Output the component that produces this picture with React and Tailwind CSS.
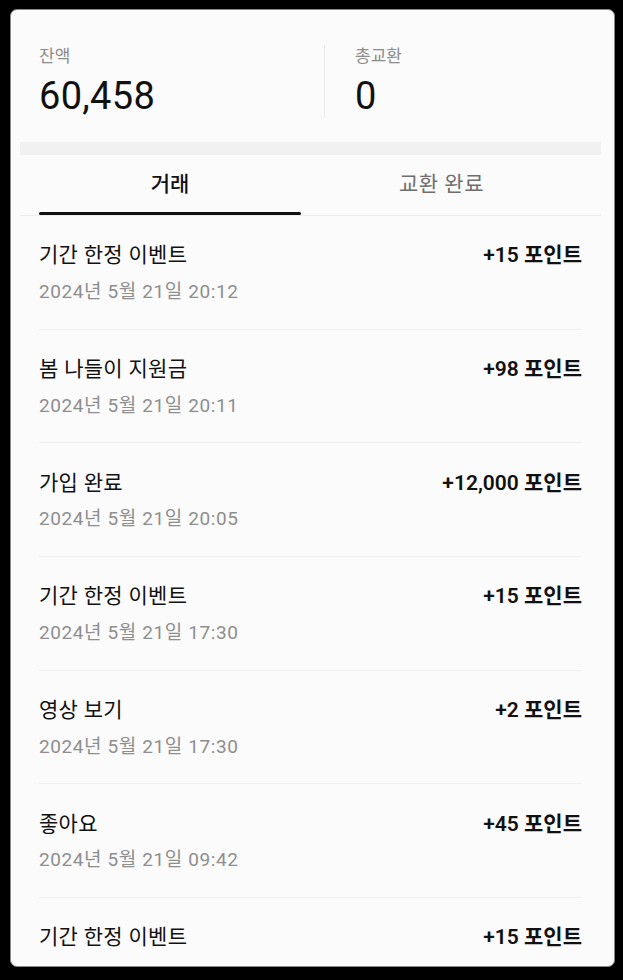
import React from "react";

const rows = [
  { title: "기간 한정 이벤트", date: "2024년 5월 21일 20:12", amount: "+15 포인트" },
  { title: "봄 나들이 지원금", date: "2024년 5월 21일 20:11", amount: "+98 포인트" },
  { title: "가입 완료", date: "2024년 5월 21일 20:05", amount: "+12,000 포인트" },
  { title: "기간 한정 이벤트", date: "2024년 5월 21일 17:30", amount: "+15 포인트" },
  { title: "영상 보기", date: "2024년 5월 21일 17:30", amount: "+2 포인트" },
  { title: "좋아요", date: "2024년 5월 21일 09:42", amount: "+45 포인트" },
  { title: "기간 한정 이벤트", date: null, amount: "+15 포인트" },
];

const font = { fontFamily: 'Roboto, "Noto Sans CJK KR", "Noto Sans", sans-serif' };

export default function App() {
  return (
    <div className="w-[623px] h-[980px] bg-black pt-[9px] pl-[10px]" style={font}>
      <div className="w-[605px] h-[958px] bg-[#fbfbfb] rounded-[7px] border border-[#8a8a8a] overflow-hidden pl-[9px] pr-[13px]">
        {/* balance */}
        <div className="flex px-[19px] pt-[35px] pb-[24px]">
          <div className="w-[286px] border-r border-[#ededed]">
            <div className="text-[17px] leading-[22px] text-[#8c8c8c]">잔액</div>
            <div className="mt-[7px] text-[38px] leading-[44px] text-[#111] tracking-[0.3px]">60,458</div>
          </div>
          <div className="pl-[30px]">
            <div className="text-[17px] leading-[22px] text-[#8c8c8c]">총교환</div>
            <div className="mt-[7px] text-[38px] leading-[44px] text-[#111]">0</div>
          </div>
        </div>

        <div className="h-[13px] bg-[#f1f1f1]" />

        {/* tabs */}
        <div className="border-b border-[#ececec] px-[19px] flex">
          <div className="relative w-[262px] h-[60px] flex items-center justify-center text-[21px] font-medium text-[#111]">
            거래
            <div className="absolute left-0 right-0 bottom-0 h-[3px] bg-[#111] rounded-full" />
          </div>
          <div className="flex-1 h-[60px] flex items-center justify-center text-[21px] tracking-[0.5px] text-[#6f6f6f]">
            교환 완료
          </div>
        </div>

        {/* list */}
        <div className="px-[19px]">
          {rows.map((r, i) => (
            <div key={i} className="border-b border-[#efefef] pt-[28px] pb-[25.67px]">
              <div className="flex justify-between items-center h-[24px]">
                <span className="text-[21px] text-[#111] tracking-[0.3px]">{r.title}</span>
                <span className="text-[21px] font-semibold text-[#111]">{r.amount}</span>
              </div>
              <div className="mt-[13px] h-[22px] leading-[22px] text-[19px] tracking-[0.6px] text-[#8e8e8e]">{r.date}</div>
            </div>
          ))}
        </div>
      </div>
    </div>
  );
}
